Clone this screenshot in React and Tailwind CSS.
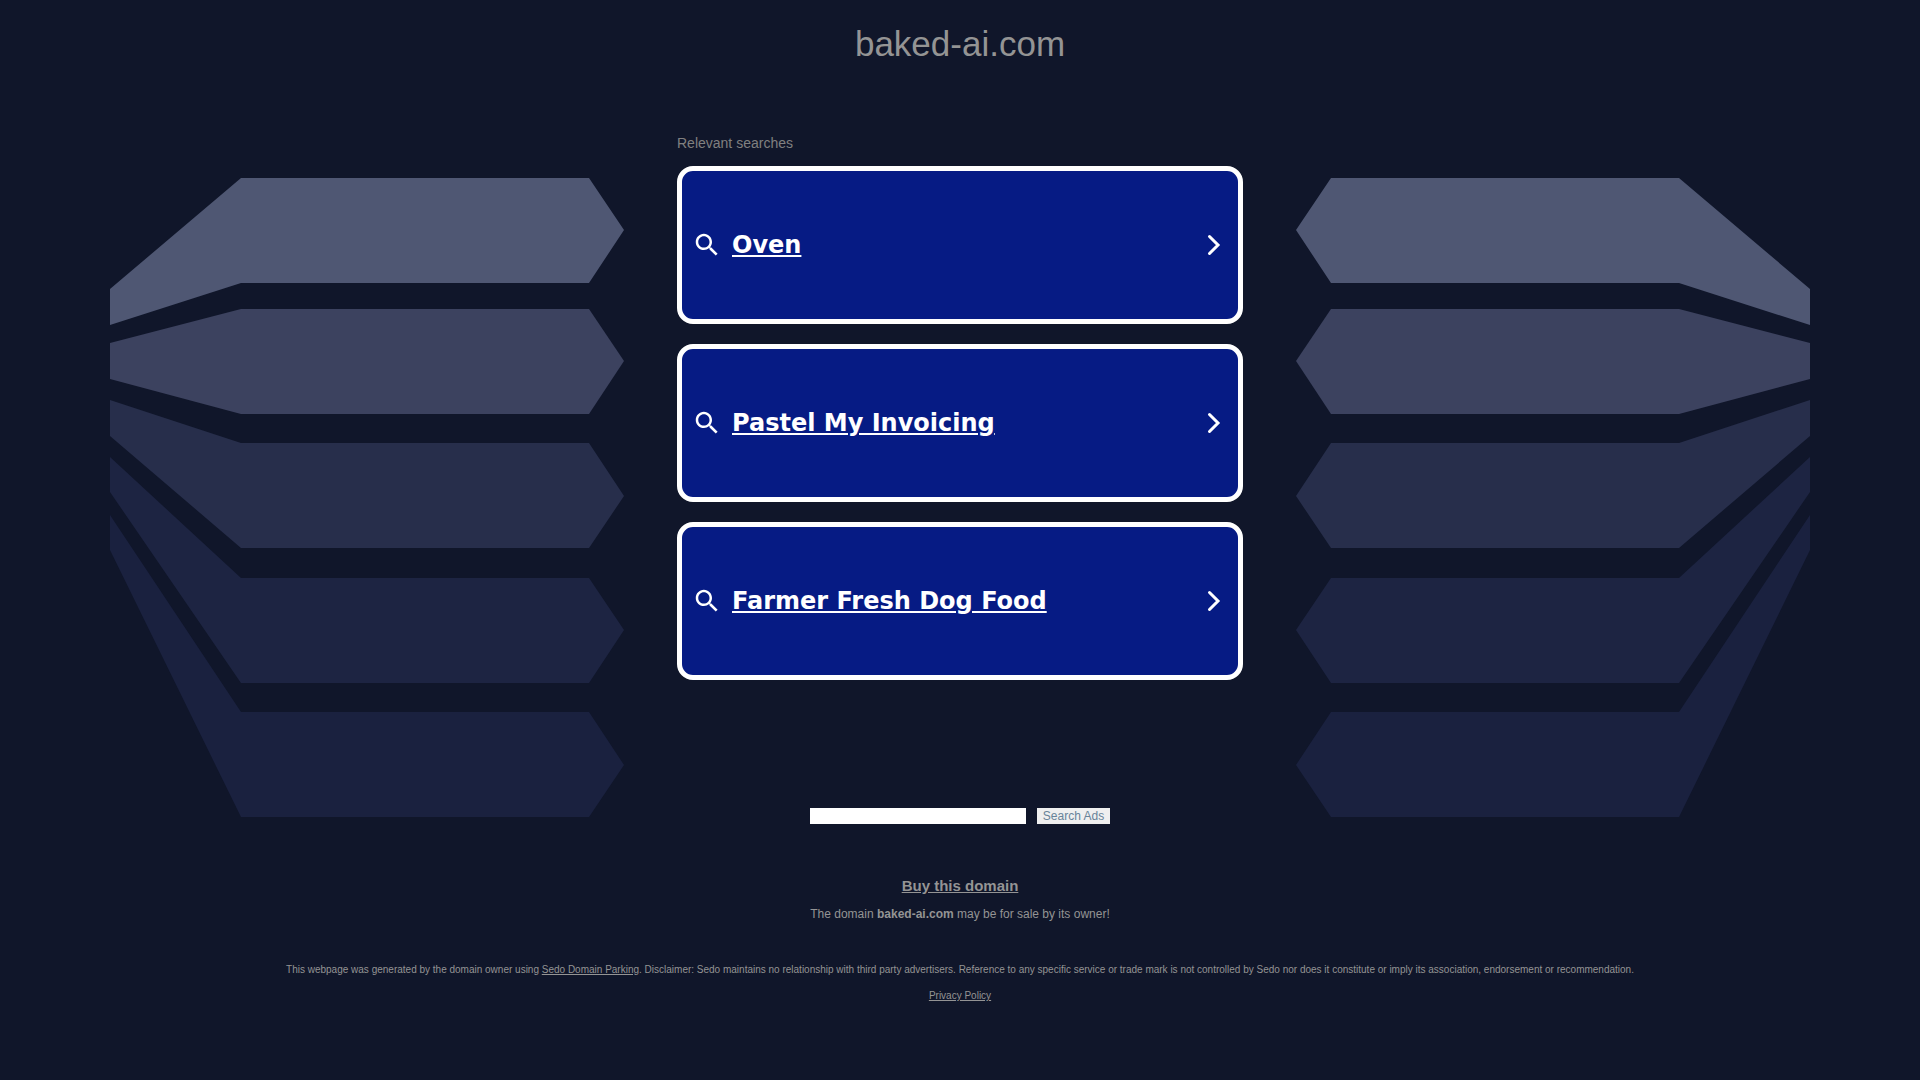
const searches = ["Oven", "Pastel My Invoicing", "Farmer Fresh Dog Food"];

const bars = [
  { color: "#4f5773", points: "131,0 479,0 514,52 479,105 131,105 0,147 0,111" },
  { color: "#3c425f", points: "131,131 479,131 514,183 479,236 131,236 0,201 0,165" },
  { color: "#272e4b", points: "131,265 479,265 514,318 479,370 131,370 0,258 0,222" },
  { color: "#1d2442", points: "131,400 479,400 514,452 479,505 131,505 0,314 0,279" },
  { color: "#1a213f", points: "131,534 479,534 514,587 479,639 131,639 0,372 0,337" },
];

function SideArt({ mirrored = false }) {
  return (
    <svg
      viewBox="0 0 514 639"
      aria-hidden="true"
      className="mt-[46px] w-[514px] min-w-0 shrink"
    >
      <g transform={mirrored ? "matrix(-1 0 0 1 514 0)" : undefined}>
        {bars.map((bar) => (
          <polygon key={bar.color} points={bar.points} fill={bar.color} />
        ))}
      </g>
    </svg>
  );
}

function SearchIcon() {
  return (
    <svg viewBox="0 0 24 24" fill="currentColor" aria-hidden="true" className="size-[30px] shrink-0">
      <path d="M15.5 14h-.79l-.28-.27C15.41 12.59 16 11.11 16 9.5 16 5.91 13.09 3 9.5 3S3 5.91 3 9.5 5.91 16 9.5 16c1.61 0 3.09-.59 4.23-1.57l.27.28v.79l5 4.99L20.49 19l-4.99-5zm-6 0C7.01 14 5 11.99 5 9.5S7.01 5 9.5 5 14 7.01 14 9.5 11.99 14 9.5 14z" />
    </svg>
  );
}

function ArrowIcon() {
  return (
    <svg
      viewBox="0 0 24 24"
      fill="none"
      stroke="currentColor"
      strokeWidth="3"
      strokeLinecap="round"
      aria-hidden="true"
      className="ml-auto size-6 shrink-0"
    >
      <path d="M7.5 3.5 16 12l-8.5 8.5" />
    </svg>
  );
}

function ResultCard({ title }) {
  return (
    <a
      href="#"
      className="flex h-[158px] items-center gap-2.5 rounded-2xl border-[5px] border-white bg-[#061b84] pr-3 pl-2.5 text-white"
    >
      <SearchIcon />
      <span className="font-[Verdana,'DejaVu_Sans',sans-serif] text-2xl font-bold underline">{title}</span>
      <ArrowIcon />
    </a>
  );
}

export default function App() {
  return (
    <div className="min-h-screen bg-[#10162a] font-['Liberation_Sans',Arial,sans-serif] text-[#949494]">
      <header className="flex h-[132px] justify-center pt-6">
        <h1 className="text-[35px] leading-10">baked-ai.com</h1>
      </header>

      <div className="flex items-start justify-center gap-[53px] px-4">
        <SideArt />
        <main className="w-[566px] shrink-0">
          <h2 className="mb-3 text-sm leading-[22px] text-[#808080]">Relevant searches</h2>
          <nav aria-label="Relevant searches" className="flex flex-col gap-5">
            {searches.map((title) => (
              <ResultCard key={title} title={title} />
            ))}
          </nav>
          <form className="mt-32 flex justify-center gap-[11px]" onSubmit={(e) => e.preventDefault()}>
            <input type="text" aria-label="Search" className="h-4 w-[216px] bg-white px-1 text-xs text-black" />
            <button type="submit" className="h-4 w-[73px] bg-[#efefef] text-xs text-[#688399]">
              Search Ads
            </button>
          </form>
        </main>
        <SideArt mirrored />
      </div>

      <section className="mt-[50px] text-center">
        <a href="#" className="text-[15px] leading-5 font-bold underline">
          Buy this domain
        </a>
        <p className="mt-2 text-xs leading-4">
          The domain <b>baked-ai.com</b> may be for sale by its owner!
        </p>
      </section>

      <footer className="mt-[42px] pb-8 text-center text-[10px] leading-3">
        <p>
          This webpage was generated by the domain owner using{" "}
          <a href="#" className="underline">
            Sedo Domain Parking
          </a>
          . Disclaimer: Sedo maintains no relationship with third party advertisers. Reference to any specific service
          or trade mark is not controlled by Sedo nor does it constitute or imply its association, endorsement or
          recommendation.
        </p>
        <a href="#" className="mt-3.5 inline-block underline">
          Privacy Policy
        </a>
      </footer>
    </div>
  );
}
